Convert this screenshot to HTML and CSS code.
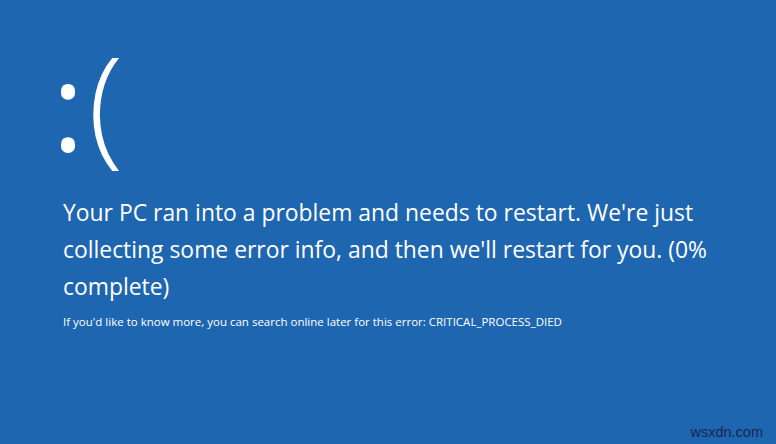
FILE: index.html
```html
<!DOCTYPE html>
<html>
<head>
<meta charset="utf-8">
<link rel="stylesheet" href="styles.css">
</head>
<body>
<main class="screen">
  <div class="face"><span class="colon">:</span><span class="paren">(</span></div>
  <p class="message">Your PC ran into a problem and needs to restart. We're just collecting some error info, and then we'll restart for you. (0% complete)</p>
  <p class="details">If you'd like to know more, you can search online later for this error: CRITICAL_PROCESS_DIED</p>
  <span class="watermark">wsxdn.com</span>
</main>
</body>
</html>
```
FILE: styles.css
```css
html, body {
  margin: 0;
  padding: 0;
}
body {
  background: #1f66b1;
  width: 776px;
  height: 444px;
  overflow: hidden;
}
.screen {
  position: relative;
  width: 776px;
  height: 444px;
  box-sizing: border-box;
  padding: 31px 40px 0 56px;
  color: #ffffff;
  font-family: "Open Sans", "Noto Sans", sans-serif;
}
.face {
  font-size: 122px;
  font-weight: 300;
  line-height: 140px;
  height: 141px;
  margin-left: -4px;
  white-space: nowrap;
}
.colon {
  font-size: 122px;
  font-weight: 400;
}
.paren {
  font-size: 130px;
  font-weight: 300;
  margin-left: 4px;
}
.message {
  margin: 22px 0 0 7px;
  font-size: 22.9px;
  line-height: 37px;
  width: 680px;
}
.details {
  margin: 9px 0 0 7px;
  font-size: 11.5px;
  line-height: 16px;
}
.watermark {
  position: absolute;
  right: 13px;
  bottom: 4px;
  color: #162650;
  font-family: "Liberation Sans", Arial, sans-serif;
  font-size: 14.5px;
}
```
